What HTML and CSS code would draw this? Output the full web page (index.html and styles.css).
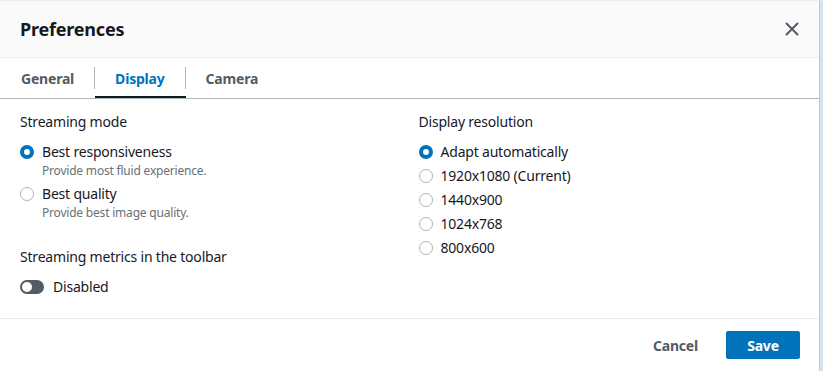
FILE: index.html
```html
<!DOCTYPE html>
<html>
<head>
    <title>Preferences</title>
    <link rel="stylesheet" href="styles.css">
</head>
<body>
    <div class="dialog">
        <!-- Header -->
        <div class="dialog-header">
            <div class="dialog-title">Preferences</div>
            <button class="close-button" aria-label="Close">
                <svg width="16" height="16" viewBox="0 0 16 16">
                    <path d="M2 2 L14 14 M14 2 L2 14" stroke="#545b64" stroke-width="2" fill="none"/>
                </svg>
            </button>
        </div>

        <!-- Tabs -->
        <div class="tabs">
            <div class="tab">General</div>
            <div class="tab active">Display</div>
            <div class="tab">Camera</div>
        </div>

        <!-- Content -->
        <div class="dialog-body">
            <div class="column">
                <div class="field">
                    <div class="field-label">Streaming mode</div>
                    <div class="radio-group">
                        <div class="radio-option">
                            <span class="radio checked"></span>
                            <div>
                                <div class="radio-label">Best responsiveness</div>
                                <div class="radio-desc">Provide most fluid experience.</div>
                            </div>
                        </div>
                        <div class="radio-option">
                            <span class="radio"></span>
                            <div>
                                <div class="radio-label">Best quality</div>
                                <div class="radio-desc">Provide best image quality.</div>
                            </div>
                        </div>
                    </div>
                </div>
                <div class="field">
                    <div class="field-label">Streaming metrics in the toolbar</div>
                    <div class="toggle-row">
                        <span class="toggle"></span>
                        <span class="radio-label">Disabled</span>
                    </div>
                </div>
            </div>

            <div class="column">
                <div class="field">
                    <div class="field-label">Display resolution</div>
                    <div class="radio-group">
                        <div class="radio-option"><span class="radio checked"></span><span class="radio-label">Adapt automatically</span></div>
                        <div class="radio-option"><span class="radio"></span><span class="radio-label">1920x1080 (Current)</span></div>
                        <div class="radio-option"><span class="radio"></span><span class="radio-label">1440x900</span></div>
                        <div class="radio-option"><span class="radio"></span><span class="radio-label">1024x768</span></div>
                        <div class="radio-option"><span class="radio"></span><span class="radio-label">800x600</span></div>
                    </div>
                </div>
            </div>
        </div>

        <!-- Footer -->
        <div class="dialog-footer">
            <button class="btn-link">Cancel</button>
            <button class="btn-primary">Save</button>
        </div>
    </div>
</body>
</html>
```

FILE: styles.css
```css
body {
    margin: 0;
    background: #d4e5f2;
    font-family: "Noto Sans", "Open Sans", sans-serif;
    color: #16191f;
    letter-spacing: -0.2px;
}

.dialog {
    width: 820px;
    height: 371px;
    background: white;
    border-top: 1px solid #eaeded;
    border-right: 1px solid #b9ccda;
    box-sizing: border-box;
    display: flex;
    flex-direction: column;
}

/* Header */
.dialog-header {
    height: 57px;
    background: #fafafa;
    border-bottom: 1px solid #eaeded;
    display: flex;
    align-items: center;
    justify-content: space-between;
    padding: 0 20px 0 20px;
    box-sizing: border-box;
}

.dialog-title {
    font-size: 18px;
    font-weight: bold;
}

.close-button {
    background: none;
    border: none;
    padding: 0;
    width: 16px;
    height: 16px;
    margin-right: -1px;
    cursor: pointer;
}

/* Tabs */
.tabs {
    display: flex;
    height: 41px;
    border-bottom: 1px solid #aab7b8;
    box-sizing: border-box;
    padding-left: 1px;
}

.tab {
    position: relative;
    display: flex;
    align-items: center;
    padding: 0 21px 0 20px;
    font-size: 14px;
    font-weight: bold;
    color: #545b64;
    cursor: pointer;
}

.tab + .tab::before {
    content: "";
    position: absolute;
    left: -1px;
    top: 9px;
    height: 22px;
    border-left: 1px solid #aab7b8;
}

.tab.active {
    color: #0073bb;
    border-bottom: 2px solid #16191f;
    padding-top: 2px;
}

/* Body */
.dialog-body {
    flex: 1;
    display: grid;
    grid-template-columns: 1fr 1fr;
    column-gap: 18px;
    padding: 13px 20px 0 20px;
    border-bottom: 1px solid #eaeded;
}

.column {
    display: flex;
    flex-direction: column;
    gap: 25px;
}

.field-label {
    font-size: 14px;
    line-height: 20px;
    margin-bottom: 10px;
}

.radio-group {
    display: flex;
    flex-direction: column;
    gap: 4px;
}

.radio-option {
    display: flex;
    align-items: flex-start;
    gap: 8px;
}

.radio {
    width: 14px;
    height: 14px;
    margin-top: 3px;
    border: 1px solid #aab7b8;
    border-radius: 50%;
    box-sizing: border-box;
    flex-shrink: 0;
}

.radio.checked {
    border: 4px solid #0073bb;
    background: white;
}

.radio-label {
    font-size: 14px;
    line-height: 20px;
}

.radio-desc {
    font-size: 12px;
    line-height: 18px;
    color: #687078;
}

.toggle-row {
    display: flex;
    align-items: center;
    gap: 9px;
}

.toggle {
    position: relative;
    width: 24px;
    height: 14px;
    border-radius: 7px;
    background: #545b64;
}

.toggle::after {
    content: "";
    position: absolute;
    left: 2px;
    top: 2px;
    width: 10px;
    height: 10px;
    border-radius: 50%;
    background: white;
}

/* Footer */
.dialog-footer {
    display: flex;
    justify-content: flex-end;
    align-items: center;
    gap: 14px;
    padding: 12px 19px 12px 20px;
}

.btn-link {
    background: none;
    border: none;
    font-family: inherit;
    font-size: 14px;
    font-weight: bold;
    letter-spacing: inherit;
    color: #545b64;
    padding: 4px 14px;
    cursor: pointer;
}

.btn-primary {
    background: #0073bb;
    color: white;
    border: 1px solid #0073bb;
    border-radius: 2px;
    font-family: inherit;
    font-size: 14px;
    font-weight: bold;
    letter-spacing: inherit;
    width: 74px;
    height: 28px;
    cursor: pointer;
}
```
